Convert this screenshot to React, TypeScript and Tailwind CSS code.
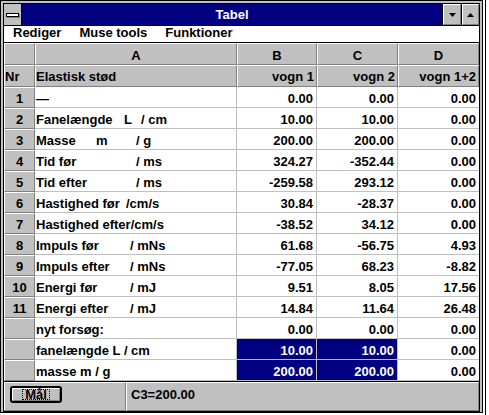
import React from 'react';

type Row = {
  nr: string;
  label: React.ReactNode;
  b: string;
  c: string;
  d: string;
  sel?: boolean;
};

// raised 3d edge used by the grey header cells and buttons
const bevel =
  'bg-[#c0c0c0] border border-t-white border-l-white border-b-[#808080] border-r-[#808080]';

const rows: Row[] = [
  { nr: '1', label: '—', b: '0.00', c: '0.00', d: '0.00' },
  {
    nr: '2',
    label: (
      <>
        <span className="inline-block w-[88px]">Fanelængde</span>
        <span className="inline-block w-[17px]">L</span>/ cm
      </>
    ),
    b: '10.00',
    c: '10.00',
    d: '0.00',
  },
  {
    nr: '3',
    label: (
      <>
        <span className="inline-block w-[60px]">Masse</span>
        <span className="inline-block w-[40px]">m</span>/ g
      </>
    ),
    b: '200.00',
    c: '200.00',
    d: '0.00',
  },
  {
    nr: '4',
    label: (
      <>
        <span className="inline-block w-[100px]">Tid før</span>/ ms
      </>
    ),
    b: '324.27',
    c: '-352.44',
    d: '0.00',
  },
  {
    nr: '5',
    label: (
      <>
        <span className="inline-block w-[100px]">Tid efter</span>/ ms
      </>
    ),
    b: '-259.58',
    c: '293.12',
    d: '0.00',
  },
  {
    nr: '6',
    label: (
      <>
        <span className="inline-block w-[90px]">Hastighed før</span>/cm/s
      </>
    ),
    b: '30.84',
    c: '-28.37',
    d: '0.00',
  },
  { nr: '7', label: 'Hastighed efter/cm/s', b: '-38.52', c: '34.12', d: '0.00' },
  {
    nr: '8',
    label: (
      <>
        <span className="inline-block w-[94px]">Impuls før</span>/ mNs
      </>
    ),
    b: '61.68',
    c: '-56.75',
    d: '4.93',
  },
  {
    nr: '9',
    label: (
      <>
        <span className="inline-block w-[94px]">Impuls efter</span>/ mNs
      </>
    ),
    b: '-77.05',
    c: '68.23',
    d: '-8.82',
  },
  {
    nr: '10',
    label: (
      <>
        <span className="inline-block w-[94px]">Energi før</span>/ mJ
      </>
    ),
    b: '9.51',
    c: '8.05',
    d: '17.56',
  },
  {
    nr: '11',
    label: (
      <>
        <span className="inline-block w-[94px]">Energi efter</span>/ mJ
      </>
    ),
    b: '14.84',
    c: '11.64',
    d: '26.48',
  },
  { nr: '', label: 'nyt forsøg:', b: '0.00', c: '0.00', d: '0.00' },
  { nr: '', label: 'fanelængde L / cm', b: '10.00', c: '10.00', d: '0.00', sel: true },
  { nr: '', label: 'masse m / g', b: '200.00', c: '200.00', d: '0.00', sel: true },
];

const Arrow: React.FC<{ up?: boolean }> = ({ up }) => (
  <svg width="7" height="4" viewBox="0 0 7 4">
    <path d={up ? 'M3.5 0 L7 4 L0 4 Z' : 'M0 0 L7 0 L3.5 4 Z'} fill="#000" />
  </svg>
);

const TitleBar = () => (
  <div className="flex h-[22px] shrink-0 border-b border-black">
    <div className="w-[18px] border-r border-black bg-[#c0c0c0] flex items-center justify-center">
      <div className="w-[13px] h-[4px] bg-white border border-black shadow-[1px_1px_0_#808080]" />
    </div>
    <div className="flex-1 bg-[#000080] text-white text-center leading-[21px]">Tabel</div>
    <div className="w-[19px] border-l border-black flex">
      <div className={`flex-1 ${bevel} flex items-center justify-center`}>
        <Arrow />
      </div>
    </div>
    <div className="w-[18px] border-l border-black flex">
      <div className={`flex-1 ${bevel} flex items-center justify-center`}>
        <Arrow up />
      </div>
    </div>
  </div>
);

const MenuBar = () => (
  <div className="flex h-[17px] shrink-0 border-b border-black bg-white leading-[14px]">
    <span className="px-[9px]">Rediger</span>
    <span className="px-[9px]">Muse tools</span>
    <span className="px-[9px]">Funktioner</span>
  </div>
);

const Sheet = () => {
  const head = `h-[22px] ${bevel} leading-[16px]`;
  const cell = 'h-[21px] border-b border-[#c0c0c0] pt-[4px] leading-[16px] whitespace-nowrap';
  return (
    <div className="grid grid-cols-[31px_202px_80px_81px_81px] h-[338px] shrink-0 content-start">
      <div className={`${head} pt-[4px]`} />
      <div className={`${head} pt-[4px] text-center`}>A</div>
      <div className={`${head} pt-[4px] text-center`}>B</div>
      <div className={`${head} pt-[4px] text-center`}>C</div>
      <div className={`${head} pt-[4px] text-center`}>D</div>

      <div className={`${head} pt-[3px]`}>Nr</div>
      <div className={`${head} pt-[3px]`}>Elastisk stød</div>
      <div className={`${head} pt-[3px] text-right pr-[2px]`}>vogn 1</div>
      <div className={`${head} pt-[3px] text-right pr-[2px]`}>vogn 2</div>
      <div className={`${head} pt-[3px] text-right pr-[2px]`}>vogn 1+2</div>

      {rows.map((r, i) => (
        <React.Fragment key={i}>
          <div className={`h-[21px] ${bevel} pt-[3px] leading-[16px] text-center`}>{r.nr}</div>
          <div className={`${cell} border-r bg-white pl-[1px]`}>{r.label}</div>
          <div
            className={`${cell} border-r text-right pr-[3px] ${
              r.sel ? 'bg-[#000080] text-white' : 'bg-white'
            }`}
          >
            {r.b}
          </div>
          <div
            className={`${cell} border-r text-right pr-[3px] ${
              r.sel ? 'bg-[#000080] text-white' : 'bg-white'
            }`}
          >
            {r.c}
          </div>
          <div className={`${cell} bg-white text-right pr-[3px]`}>{r.d}</div>
        </React.Fragment>
      ))}
    </div>
  );
};

const StatusBar = () => (
  <div className="flex h-[30px] shrink-0 border-t border-black bg-[#c0c0c0]">
    <div className={`w-[122px] ${bevel} pl-[5px] pt-[3px]`}>
      <div className="w-[52px] h-[17px] border-2 border-black rounded-[3px] flex">
        <div className={`flex-1 ${bevel} flex items-center justify-center`}>
          <span className="border border-dotted border-black px-[2px] leading-[9px]">Mål</span>
        </div>
      </div>
    </div>
    <div className={`flex-1 ${bevel} pl-[4px] pt-[4px] leading-[16px]`}>C3=200.00</div>
  </div>
);

export default function App() {
  return (
    <div className="relative w-[489px] h-[415px] bg-white overflow-hidden font-['Liberation_Sans',Arial,sans-serif] font-bold text-[13px] text-black">
      <div className="w-[483px] h-[413px] border border-black bg-[#c0c0c0] p-[2px] pb-0">
        <div className="h-full border border-black bg-white flex flex-col">
          <TitleBar />
          <MenuBar />
          <Sheet />
          <StatusBar />
        </div>
      </div>
      <div className="absolute left-[485px] top-0 h-full w-px bg-black" />
    </div>
  );
}
